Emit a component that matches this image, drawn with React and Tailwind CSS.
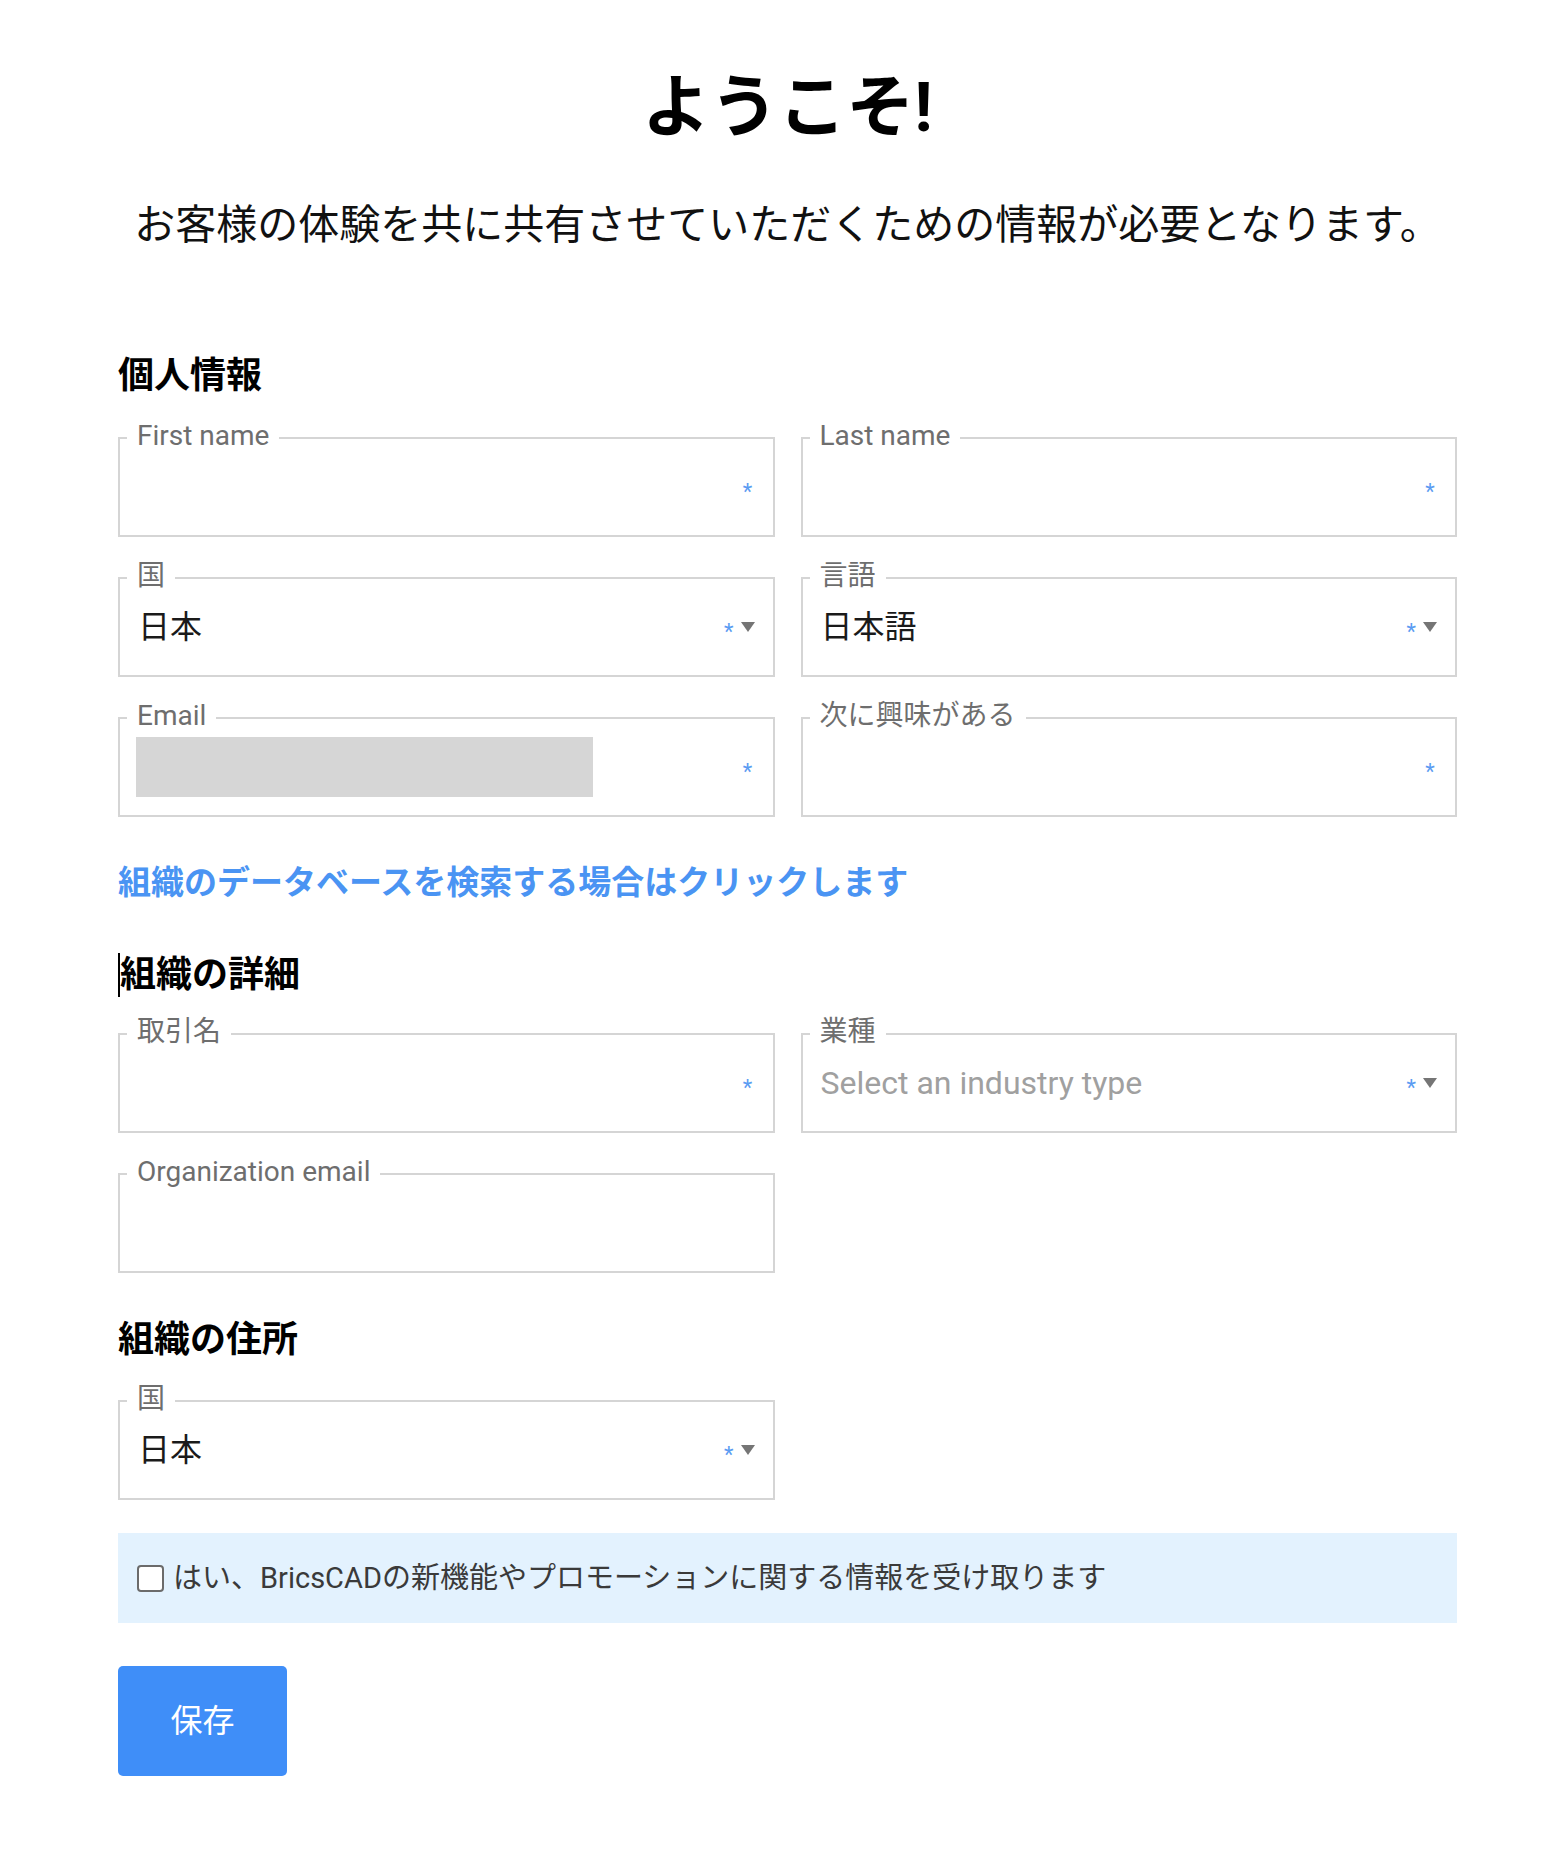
const FONT = { fontFamily: 'Roboto, "Noto Sans CJK JP", sans-serif' };

function Caret() {
  return (
    <svg width="14" height="10" viewBox="0 0 14 10" className="block">
      <path d="M0 0 L14 0 L7 10 Z" fill="#757575" />
    </svg>
  );
}

function Req() {
  return <span className="block text-[22px] leading-none text-[#5b9cf2] translate-y-[5px]">*</span>;
}

function Field({ label, value, placeholder, select, required = true, children }) {
  return (
    <div className="relative h-[100px] border-2 border-[#d5d5d5] flex items-center pl-[16px] pr-[18px]">
      <span className="absolute left-[7px] -top-[3px] -translate-y-1/2 bg-white px-[10px] text-[28px] leading-none text-[#6e6e6e]">
        {label}
      </span>
      <div className="flex-1 min-w-0 flex items-center">
        {children}
        {value && <span className="pl-[2px] text-[32px] leading-none text-[#1a1a1a]">{value}</span>}
        {placeholder && <span className="pl-[2px] text-[32px] leading-none text-[#a0a0a0]">{placeholder}</span>}
      </div>
      <div className="flex items-center gap-[7px]">
        {select ? (
          <>
            <Req />
            <Caret />
          </>
        ) : required ? (
          <span className="w-[14px] flex justify-center"><Req /></span>
        ) : null}
      </div>
    </div>
  );
}

function Heading({ children, className = "" }) {
  return <h2 className={`text-[36px] leading-[36px] font-bold text-black ${className}`}>{children}</h2>;
}

export default function App() {
  return (
    <div className="min-h-[1872px] bg-white" style={FONT}>
      <div className="ml-[118px] w-[1339px] pt-[74px]">
        <h1 className="text-center text-[68px] leading-[68px] font-bold text-black">ようこそ!</h1>
        <p className="mt-[63px] text-center text-[41px] leading-[41px] text-[#111]">
          お客様の体験を共に共有させていただくための情報が必要となります。
        </p>

        <Heading className="mt-[112px]">個人情報</Heading>
        <div className="mt-[43px] grid grid-cols-2 gap-x-[26px] gap-y-[40px]">
          <Field label="First name" />
          <Field label="Last name" />
          <Field label="国" value="日本" select />
          <Field label="言語" value="日本語" select />
          <Field label="Email">
            <div className="w-[457px] h-[60px] bg-[#d6d6d6]" />
          </Field>
          <Field label="次に興味がある" />
        </div>

        <a href="#" className="block mt-[49px] text-[33px] leading-[33px] font-bold text-[#4a94f3]">
          組織のデータベースを検索する場合はクリックします
        </a>

        <Heading className="mt-[58px] flex items-center">
          <span className="inline-block w-[2px] h-[44px] -my-[4px] bg-black" />
          組織の詳細
        </Heading>
        <div className="mt-[40px] grid grid-cols-2 gap-x-[26px] gap-y-[40px]">
          <Field label="取引名" />
          <Field label="業種" placeholder="Select an industry type" select />
          <Field label="Organization email" required={false} />
        </div>

        <Heading className="mt-[49px]">組織の住所</Heading>
        <div className="mt-[42px] grid grid-cols-2 gap-x-[26px]">
          <Field label="国" value="日本" select />
        </div>

        <label className="mt-[33px] h-[90px] bg-[#e3f2fe] flex items-center pl-[19px] gap-[9px]">
          <span className="w-[27px] h-[27px] rounded-[4px] border-2 border-[#6b6b6b] bg-white shrink-0" />
          <span className="text-[29px] leading-none text-[#3a3a3a]">
            はい、BricsCADの新機能やプロモーションに関する情報を受け取ります
          </span>
        </label>

        <button className="mt-[43px] w-[169px] h-[110px] rounded-[5px] bg-[#3f8ef8] text-white text-[32px]">
          保存
        </button>
      </div>
    </div>
  );
}
